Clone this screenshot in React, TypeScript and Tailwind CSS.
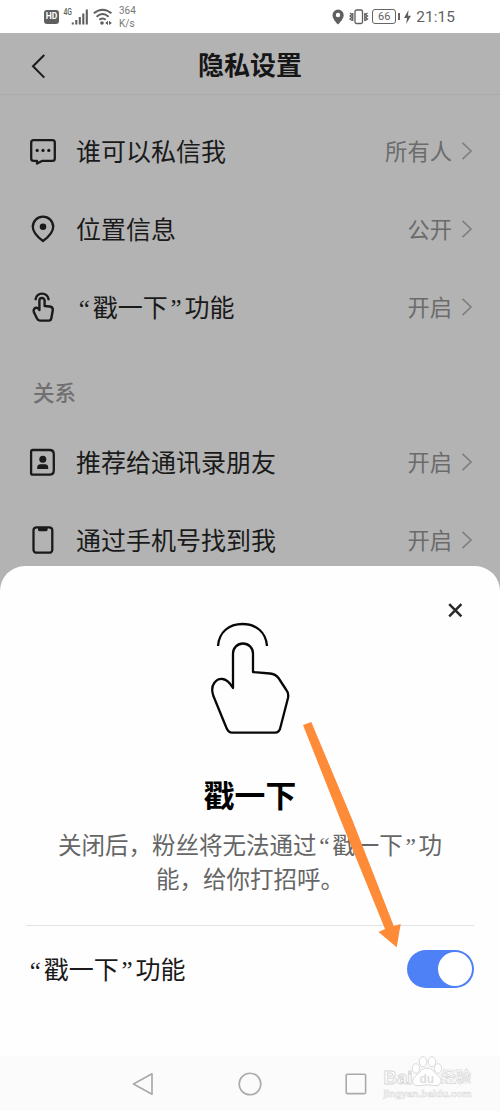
import React from 'react';

const ink = '#1a1a1a';

function Quote({ children }: { children: React.ReactNode }) {
  return (
    <span className="inline-block w-[0.67em] text-center font-['Liberation_Serif',serif] leading-none">{children}</span>
  );
}

function PokeText() {
  return (
    <>
      <Quote>“</Quote>戳一下<Quote>”</Quote>
    </>
  );
}

function ChatIcon() {
  return (
    <svg width="28" height="30" viewBox="0 0 28 30" fill="none" stroke={ink} strokeWidth="2.3" strokeLinejoin="round">
      <path d="M4.6 4.2H23.4Q25.8 4.2 25.8 6.6V22.4Q25.8 24.8 23.4 24.8H13.5L8 27.6V24.8H4.6Q2.2 24.8 2.2 22.4V6.6Q2.2 4.2 4.6 4.2Z" />
      <g fill={ink} stroke="none">
        <circle cx="8.2" cy="14.4" r="1.6" />
        <circle cx="14" cy="14.4" r="1.6" />
        <circle cx="19.8" cy="14.4" r="1.6" />
      </g>
    </svg>
  );
}

function PinIcon() {
  return (
    <svg width="28" height="30" viewBox="0 0 28 30" fill="none" stroke={ink} strokeWidth="2.3" strokeLinejoin="round">
      <path d="M14 27C11.5 25.2 3.8 19.5 3.8 12.8A10.2 10.2 0 0 1 24.2 12.8C24.2 19.5 16.5 25.2 14 27Z" />
      <circle cx="14" cy="12.8" r="3.3" fill={ink} stroke="none" />
    </svg>
  );
}

function TapIcon() {
  return (
    <svg width="28" height="30" viewBox="0 0 28 30" fill="none" stroke={ink} strokeWidth="2.4" strokeLinejoin="round" strokeLinecap="round">
      <path d="M6.6 7.2C7.4 3.4 9.8 1.6 13 1.6S18.8 3.4 19.6 7.2" />
      <path d="M10.4 18V8.6A2.6 2.6 0 0 1 15.6 8.6V14L20.8 14.5Q24 15 23.8 18L22.4 26Q22 28.6 19.8 28.6H11Q9 28.6 8 26.5L4.8 20C4 17.4 5.8 15.3 8 15.8Q9.6 16.2 10.4 18" />
    </svg>
  );
}

function ContactIcon() {
  return (
    <svg width="28" height="30" viewBox="0 0 28 30" fill="none" stroke={ink} strokeWidth="2.3">
      <path d="M3.8 3H20.5Q24.8 3 24.8 7.3V23.3Q24.8 27.7 20.5 27.7H3.8Q2.1 27.7 2.1 26V4.7Q2.1 3 3.8 3Z" />
      <circle cx="13.8" cy="12.2" r="3.5" fill={ink} stroke="none" />
      <path d="M8.2 22V20.6Q8.2 17.2 11.6 17.2H15.8Q19.2 17.2 19.2 20.6V22Z" fill={ink} stroke="none" />
    </svg>
  );
}

function PhoneIcon() {
  return (
    <svg width="28" height="30" viewBox="0 0 28 30" fill="none" stroke={ink} strokeWidth="2.3">
      <rect x="4.5" y="2.3" width="18.8" height="25.4" rx="3" />
      <path d="M9 2.8H18.6V4.8Q18.6 6.2 17.2 6.2H10.4Q9 6.2 9 4.8Z" fill={ink} stroke="none" />
    </svg>
  );
}

function Row({ icon, value, children }: { icon: React.ReactNode; value: string; children: React.ReactNode }) {
  return (
    <div className="flex h-[78px] items-center pr-[27px] pl-[29px]">
      {icon}
      <span className="ml-[19px] flex-1 text-[25px] whitespace-nowrap text-[#1a1a1a]">{children}</span>
      <span className="text-[22.3px] text-[#6b6b6b]">{value}</span>
      <svg className="ml-[9px]" width="12" height="20" viewBox="0 0 12 20" fill="none" stroke="#808080" strokeWidth="1.7">
        <path d="M1.5 1.8L10 10L1.5 18.2" />
      </svg>
    </div>
  );
}

function StatusBar() {
  return (
    <div className="flex h-[33px] items-center justify-between bg-white pr-[45px] pl-[44px] font-[Roboto,sans-serif] text-[#5f5f5f]">
      <div className="flex items-center">
        <div className="flex h-[14px] w-[15px] items-center justify-center rounded-[3px] bg-[#5f5f5f] text-[8.5px] font-bold text-white">HD</div>
        <svg className="ml-[4px]" width="27" height="20" viewBox="0 0 27 20">
          <text x="0.5" y="8" fontSize="9" fontWeight="500" fill="#5f5f5f" fontFamily="Roboto" textLength="8.5" lengthAdjust="spacingAndGlyphs">4G</text>
          <g stroke="#5f5f5f" strokeWidth="2.1">
            <path d="M9.8 17.5V15.5M13.3 17.5V13M16.8 17.5V10M20.3 17.5V6.5M23.8 17.5V2.5" />
          </g>
        </svg>
        <svg className="ml-[3px]" width="20" height="19" viewBox="0 0 20 19" fill="none" stroke="#5f5f5f" strokeWidth="1.9">
          <path d="M.8 6.3Q9.6-1 18.4 6.3M3.6 9.7Q9.6 4.5 15.6 9.7M6.3 12.8Q9.6 10 12.7 12.8" />
          <g fill="#5f5f5f" stroke="none">
            <circle cx="9" cy="16" r="1.8" />
            <path d="M15 13.8V18L12.2 15.9ZM16 13.8V18L18.9 15.9Z" />
          </g>
        </svg>
        <div className="ml-[6px] text-[10px] leading-[13px] text-[#777]">
          <div>364</div>
          <div>K/s</div>
        </div>
      </div>
      <div className="flex items-center">
        <svg width="13" height="16" viewBox="0 0 13 16" fill="#5f5f5f">
          <path fillRule="evenodd" d="M6 15.5C4 13.5.5 9.5.5 6.2a5.6 5.6 0 0 1 11.2 0C11.7 9.5 8 13.5 6 15.5ZM6 8.2A2.2 2.2 0 1 0 6 3.8 2.2 2.2 0 0 0 6 8.2Z" />
        </svg>
        <svg className="ml-[4px]" width="20" height="16" viewBox="0 0 20 16" fill="none" stroke="#5f5f5f" strokeWidth="1.3">
          <rect x="6" y="1" width="7.5" height="13.5" rx="1.5" />
          <path d="M1 4L3 5.5L1 7L3 8.5L1 10L3 11.5M3.8 4V12M18.5 4L16.5 5.5L18.5 7L16.5 8.5L18.5 10L16.5 11.5M15.8 4V12" />
        </svg>
        <div className="ml-[3px] flex h-[15px] w-[24px] items-center justify-center rounded-[3px] border border-[#666] text-[11px] leading-none">66</div>
        <div className="ml-[2px] h-[7px] w-[2px] bg-[#666]" />
        <svg className="ml-[4px]" width="7" height="14" viewBox="0 0 7 14" fill="#5f5f5f">
          <path d="M4.5 0L0 8H3L2.2 14L7 5.8H4Z" />
        </svg>
        <span className="ml-[5px] pt-[2px] text-[15.4px] leading-none tracking-[0.1px]">21:15</span>
      </div>
    </div>
  );
}

function BigHand() {
  return (
    <svg width="80" height="113" viewBox="0 0 80 113" fill="none" stroke="#080808" strokeWidth="2.3" strokeLinejoin="round">
      <path d="M8 24C9 10 19 2 32.5 2S56 10 57 24" />
      <path d="M23 66V31.5A10 10 0 0 1 43 31.5V50L60 51.5Q65.5 52 68.5 56L76 67.5Q79 71 78 76L70.5 105Q69.5 110.7 65 110.7H22Q18.5 110.7 16.5 106L3.2 73.5C-.5 62 7 56.5 12.5 57Q18 57.5 23 66Z" />
    </svg>
  );
}

function BottomSheet() {
  return (
    <div className="absolute inset-x-0 top-[533px] bottom-0 flex flex-col rounded-t-[25px] bg-[#fefefe]">
      <div className="flex justify-end pt-[37px] pr-[37px]">
        <svg width="15" height="15" viewBox="0 0 15 15" stroke="#292929" strokeWidth="2.5">
          <path d="M1.2 1.2L13.4 13.4M13.4 1.2L1.2 13.4" />
        </svg>
      </div>
      <div className="mt-[4px] flex justify-center">
        <BigHand />
      </div>
      <h2 className="mt-[38px] text-center text-[30.8px] leading-[42px] font-bold text-black">戳一下</h2>
      <p className="mt-[12px] text-center text-[23.5px] leading-[34px] text-[#666]">
        关闭后，粉丝将无法通过<PokeText />功<br />能，给你打招呼。
      </p>
      <div className="mx-[26px] mt-[30px] h-px shrink-0 bg-[#e3e3e3]" />
      <div className="flex h-[85px] items-center justify-between pr-[26px] pl-[27px] text-[25px] text-[#1a1a1a]">
        <span><PokeText />功能</span>
        <div className="flex h-[38px] w-[67px] items-center justify-end rounded-full bg-[#4e80f6] pr-[2px]">
          <div className="size-[34px] rounded-full bg-white" />
        </div>
      </div>
      <svg className="pointer-events-none absolute top-[154px] left-[300px]" width="105" height="230" viewBox="0 0 105 230" fill="#fd8b38">
        <path d="M3 5L11.3 2L52 99L93.8 206L100.7 204L96.7 227.3L78.5 212L85 209L41 101Z" />
      </svg>
    </div>
  );
}

function Watermark() {
  return (
    <svg className="absolute top-0 right-[24px]" width="96" height="50" viewBox="0 0 96 50" fill="#fff" stroke="#d9d9d9" strokeWidth="1">
      <text x="3.5" y="27.5" fontFamily="Liberation Sans" fontWeight="700" fontSize="18.5" textLength="29" lengthAdjust="spacingAndGlyphs">Bai</text>
      <ellipse cx="36" cy="12.5" rx="3.7" ry="4.8" />
      <ellipse cx="43" cy="5.8" rx="3.8" ry="5" />
      <ellipse cx="52" cy="5.8" rx="3.8" ry="5" />
      <ellipse cx="58" cy="12.5" rx="3.7" ry="4.8" />
      <path d="M47 12C41 12 40 17 35.5 20C30 25 33 31 40 29.5Q47 28 54 29.5C60 31 64 25 58.5 20C54 17 53 12 47 12Z" />
      <text x="39.5" y="26.5" fontFamily="Liberation Sans" fontWeight="700" fontSize="12" fill="#dedede" stroke="none">du</text>
      <text x="61" y="26" fontFamily="Noto Sans CJK SC" fontWeight="700" fontSize="15" strokeWidth="0.7">经验</text>
      <text x="3.5" y="41" fontFamily="Liberation Sans" fontWeight="700" fontSize="8.5" strokeWidth="0.5" textLength="88" lengthAdjust="spacingAndGlyphs">jingyan.baidu.com</text>
    </svg>
  );
}

export default function App() {
  return (
    <div className="flex h-[1111px] w-[500px] flex-col overflow-hidden bg-white font-['Noto_Sans_CJK_SC',sans-serif]">
      <StatusBar />
      <main className="relative h-[1023px] overflow-hidden bg-[#b3b3b3]">
        <header className="grid h-[62px] grid-cols-[100px_1fr_100px] items-center border-b border-[#aaaaaa] pt-[4px]">
          <svg className="ml-[31px]" width="16" height="26" viewBox="0 0 16 26" fill="none" stroke="#1a1a1a" strokeWidth="2">
            <path d="M13.3 2L2 13.3L13.3 24.6" />
          </svg>
          <h1 className="pb-[3px] text-center text-[26px] leading-[38px] font-bold text-[#161616]">隐私设置</h1>
        </header>
        <div className="pt-[17px]">
          <Row icon={<ChatIcon />} value="所有人">谁可以私信我</Row>
          <Row icon={<PinIcon />} value="公开">位置信息</Row>
          <Row icon={<TapIcon />} value="开启"><PokeText />功能</Row>
          <div className="flex h-[77px] items-center pt-[15px] pl-[33px] text-[21.5px] font-medium text-[#707070]">关系</div>
          <Row icon={<ContactIcon />} value="开启">推荐给通讯录朋友</Row>
          <Row icon={<PhoneIcon />} value="开启">通过手机号找到我</Row>
        </div>
        <BottomSheet />
      </main>
      <nav className="relative h-[55px] bg-[#fbfbfb]">
        <div className="flex h-full items-center justify-between pr-[133px] pl-[132px]">
          <svg width="22" height="24" viewBox="0 0 22 24" fill="none" stroke="#aaa" strokeWidth="1.7" strokeLinejoin="round">
            <path d="M20 1.8V22.2L1.5 12Z" />
          </svg>
          <svg width="24" height="24" viewBox="0 0 24 24" fill="none" stroke="#aaa" strokeWidth="1.6">
            <circle cx="12" cy="12" r="10.8" />
          </svg>
          <svg width="22" height="22" viewBox="0 0 22 22" fill="none" stroke="#aaa" strokeWidth="1.6">
            <rect x="1.2" y="1.2" width="19.4" height="19.4" rx="1" />
          </svg>
        </div>
        <Watermark />
      </nav>
    </div>
  );
}
